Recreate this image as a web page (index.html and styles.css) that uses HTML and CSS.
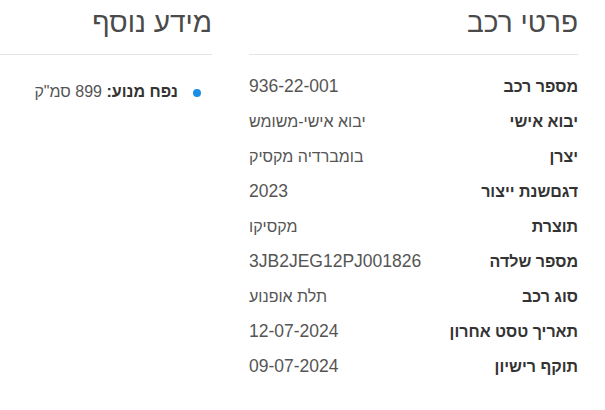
FILE: index.html
```html
<!DOCTYPE html>
<html lang="he" dir="rtl">
<head>
<meta charset="utf-8">
<link rel="stylesheet" href="styles.css">
</head>
<body>
<div class="page">
  <section class="details">
    <h2 class="title">פרטי רכב</h2>
    <dl class="list">
      <dt>מספר רכב</dt><dd class="num">936-22-001</dd>
      <dt>יבוא אישי</dt><dd>יבוא אישי-משומש</dd>
      <dt>יצרן</dt><dd>בומברדיה מקסיק</dd>
      <dt>דגםשנת ייצור</dt><dd class="num">2023</dd>
      <dt>תוצרת</dt><dd>מקסיקו</dd>
      <dt>מספר שלדה</dt><dd class="num">3JB2JEG12PJ001826</dd>
      <dt>סוג רכב</dt><dd>תלת אופנוע</dd>
      <dt>תאריך טסט אחרון</dt><dd class="num">12-07-2024</dd>
      <dt>תוקף רישיון</dt><dd class="num">09-07-2024</dd>
    </dl>
  </section>
  <section class="extra">
    <h2 class="title">מידע נוסף</h2>
    <ul class="bullets">
      <li><b>נפח מנוע:</b> 899 סמ"ק</li>
    </ul>
  </section>
</div>
</body>
</html>
```
FILE: styles.css
```css
html, body {
  margin: 0;
  padding: 0;
  background: #fff;
}
body {
  font-family: "Liberation Sans", Arial, sans-serif;
  font-size: 16px;
  color: #444;
}
.page {
  display: flex;
  gap: 37px;
  padding-right: 27px;
}
.details {
  width: 329px;
}
.extra {
  width: 212px;
}
.title {
  margin: 0;
  padding: 7px 0 15px;
  font-size: 28px;
  font-weight: normal;
  color: #4a4a4a;
  line-height: 32px;
  border-bottom: 1px solid #e5e5e5;
}
.list {
  margin: 14px 0 0;
  display: grid;
  grid-template-columns: 1fr auto;
  grid-auto-rows: 35px;
  align-items: center;
}
.list dt {
  font-weight: bold;
  color: #333;
}
.list dd {
  margin: 0;
  color: #555;
  text-align: left;
}
.list dd.num {
  font-size: 17.5px;
}
.bullets {
  margin: 28px 0 0;
  padding: 0 34px 0 0;
  list-style: none;
  color: #555;
}
.bullets li {
  position: relative;
}
.bullets li::before {
  content: "";
  position: absolute;
  right: -23px;
  top: 6px;
  width: 8px;
  height: 8px;
  border-radius: 50%;
  background: #1a8fe3;
}
.bullets b {
  color: #333;
}
```
